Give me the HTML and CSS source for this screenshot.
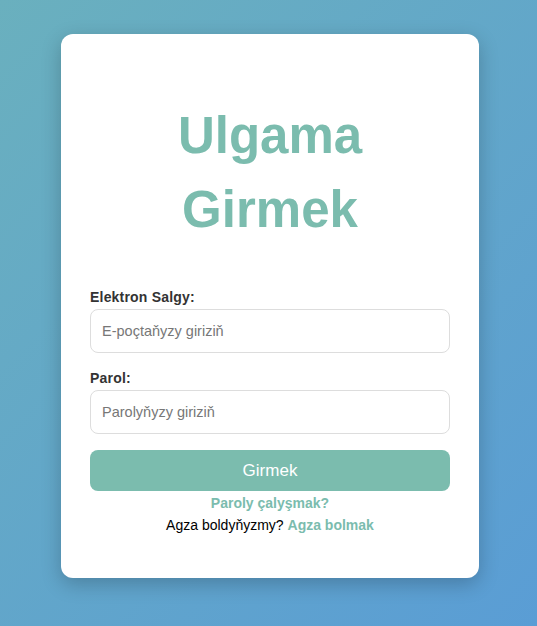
FILE: index.html
```html
<!DOCTYPE html>
<html lang="tk">
<head>
<meta charset="utf-8">
<title>Ulgama Girmek</title>
<link rel="stylesheet" href="styles.css">
</head>
<body>
<main class="page">
  <form class="card">
    <h1 class="title">Ulgama Girmek</h1>
    <div class="field">
      <label class="label" for="email">Elektron Salgy:</label>
      <input class="input" id="email" type="email" placeholder="E-poçtaňyzy giriziň">
    </div>
    <div class="field">
      <label class="label" for="pass">Parol:</label>
      <input class="input" id="pass" type="password" placeholder="Parolyňyzy giriziň">
    </div>
    <button class="btn" type="button">Girmek</button>
    <p class="forgot"><a href="#" class="link">Paroly çalyşmak?</a></p>
    <p class="signup">Agza boldyňyzmy? <a href="#" class="link">Agza bolmak</a></p>
  </form>
</main>
</body>
</html>
```

FILE: styles.css
```css
* { box-sizing: border-box; }
html, body { margin: 0; height: 100%; }
body {
  font-family: "Liberation Sans", Arial, sans-serif;
  background: linear-gradient(135deg, #6ab0be 0%, #5a9dd5 100%);
}
.page {
  min-height: 626px;
  display: flex;
  justify-content: center;
  align-items: flex-start;
  padding: 34px 0 0 3px;
}
.card {
  width: 418px;
  height: 544px;
  background: #fff;
  border-radius: 12px;
  box-shadow: 0 6px 20px rgba(0, 0, 0, 0.22);
  padding: 29px 29px 0;
}
.title {
  margin: 36px 0 42px;
  font-size: 51px;
  line-height: 74px;
  font-weight: 700;
  color: #7bbcae;
  text-align: center;
}
.field { margin-bottom: 17px; }
.field:last-of-type { margin-bottom: 16px; }
.label {
  display: block;
  font-size: 14px;
  font-weight: 700;
  color: #333;
  line-height: 16px;
  margin-bottom: 4px;
  letter-spacing: 0.2px;
}
.input {
  display: block;
  width: 100%;
  height: 44px;
  padding: 0 11px;
  border: 1px solid #ddd;
  border-radius: 8px;
  font-family: inherit;
  font-size: 14.5px;
  color: #333;
  outline: none;
}
.input::placeholder { color: #777; }
.btn {
  display: block;
  width: 100%;
  height: 41px;
  border: 0;
  border-radius: 8px;
  background: #7bbcae;
  color: #fff;
  font-family: inherit;
  font-size: 17px;
  cursor: pointer;
}
.forgot, .signup {
  margin: 0;
  text-align: center;
  font-size: 14px;
  line-height: 22px;
  color: #000;
}
.forgot { margin-top: 1px; }
.link {
  color: #7bbcae;
  font-weight: 700;
  text-decoration: none;
}
```
